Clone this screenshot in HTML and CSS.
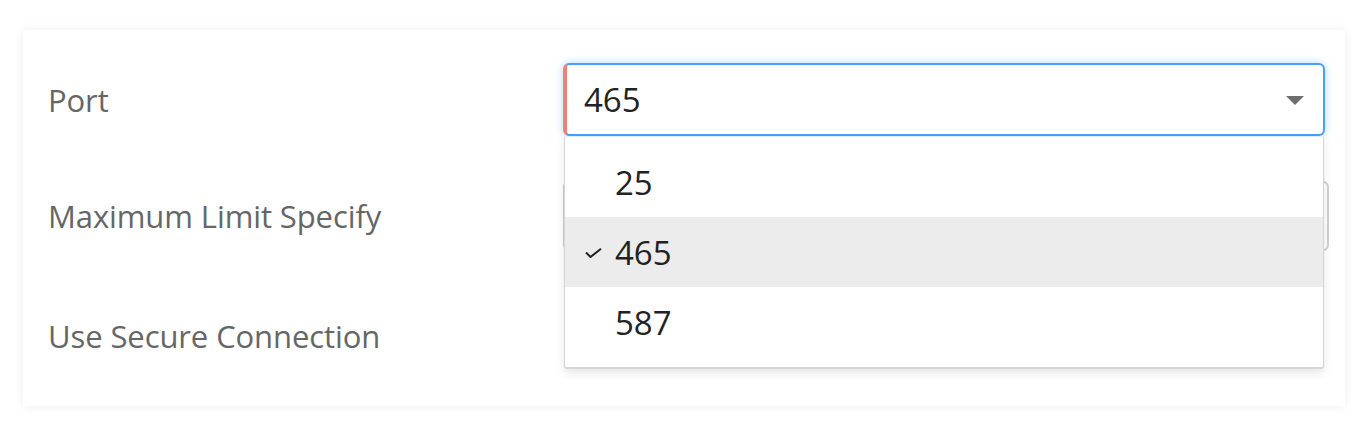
FILE: index.html
```html
<!DOCTYPE html>
<html>
<head>
<meta charset="utf-8">
<link rel="stylesheet" href="styles.css">
</head>
<body>
<div class="card">
  <div class="row row-port">
    <div class="label">Port</div>
    <div class="field-wrap">
      <div class="select">
        <span class="value">465</span>
        <span class="arrow"></span>
      </div>
      <ul class="menu">
        <li class="item">25</li>
        <li class="item selected"><svg class="check" viewBox="0 0 17 10" width="17" height="10"><path d="M1 4.5 L5.5 9 L16 0.8" fill="none" stroke="#222" stroke-width="2"/></svg>465</li>
        <li class="item">587</li>
      </ul>
    </div>
  </div>
  <div class="row row-max">
    <div class="label">Maximum Limit Specify</div>
    <div class="input"></div>
  </div>
  <div class="row row-secure">
    <div class="label">Use Secure Connection</div>
  </div>
</div>
</body>
</html>
```

FILE: styles.css
```css
html, body {
  margin: 0;
  padding: 0;
  background: #ffffff;
}
body {
  font-family: "Open Sans", "Lato", sans-serif;
  width: 1370px;
  height: 436px;
  overflow: hidden;
}
.card {
  margin: 30px 0 0 23px;
  width: 1322px;
  height: 376px;
  box-sizing: border-box;
  padding: 33px 0 0 25px;
  background: #fff;
  box-shadow: 0 0 10px rgba(0, 0, 0, 0.07);
}
.row {
  display: flex;
  align-items: center;
}
.label {
  width: 515px;
  flex: none;
  font-size: 31px;
  color: #666666;
  letter-spacing: -0.1px;
}
.row-port { height: 73px; }
.row-max { height: 70px; margin-top: 45px; }
.row-secure { height: 70px; margin-top: 50px; }
.field-wrap {
  position: relative;
  width: 762px;
  height: 73px;
}
.select {
  box-sizing: border-box;
  height: 73px;
  width: 762px;
  border: 2px solid #47a0f7;
  border-left: 4px solid #f07f7c;
  border-radius: 6px;
  box-shadow: 0 0 8px rgba(71, 160, 247, 0.4);
  display: flex;
  align-items: center;
  justify-content: space-between;
  padding: 0 19px 0 17px;
}
.value {
  font-size: 33px;
  color: #222;
}
.arrow {
  width: 0;
  height: 0;
  border-left: 9px solid transparent;
  border-right: 9px solid transparent;
  border-top: 9px solid #6f6f6f;
  margin-top: 2px;
}
.menu {
  position: absolute;
  left: 1px;
  top: 74px;
  width: 760px;
  margin: 0;
  padding: 10px 0;
  list-style: none;
  background: #fff;
  box-sizing: border-box;
  height: 232px;
  border-left: 1px solid #d4d4d4;
  border-right: 1px solid #d4d4d4;
  border-bottom: 2px solid #d6d6d6;
  border-radius: 0 0 3px 3px;
  box-shadow: 0 4px 10px rgba(0, 0, 0, 0.1);
  z-index: 5;
}
.item {
  height: 70px;
  display: flex;
  align-items: center;
  padding-left: 50px;
  font-size: 33px;
  color: #222;
  position: relative;
}
.item.selected {
  background: #ececec;
}
.check {
  position: absolute;
  left: 20px;
  top: 31px;
}
.input {
  box-sizing: border-box;
  width: 766px;
  height: 70px;
  border: 2px solid #cfcfcf;
  border-radius: 6px;
}
```
